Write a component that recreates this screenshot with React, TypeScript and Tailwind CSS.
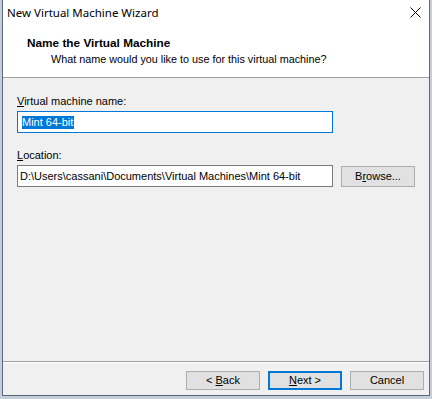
import React from "react";

const ff = "font-['Microsoft_Sans_Serif','Liberation_Sans',Arial,sans-serif]";

function Btn({ children, primary = false, className = "" }: { children: React.ReactNode; primary?: boolean; className?: string }) {
  return (
    <div
      className={
        "flex items-center justify-center bg-[#e1e1e1] leading-none text-black text-[11px] " +
        ff +
        " " +
        (primary ? "border-2 border-[#0078d7] " : "border border-[#adadad] ") +
        className
      }
    >
      {children}
    </div>
  );
}

export default function App() {
  return (
    <div className="w-[432px] h-[399px] bg-[#c5cfd9] overflow-hidden text-black">
      <div className="ml-[2px] w-[428px] h-[396px] border-l border-r border-b border-[#5b6776] bg-[#f0f0f0] flex flex-col">
        {/* Header */}
        <div className="relative h-[78px] bg-white border-b border-[#a0a0a0] flex flex-col">
          <div className="h-[26px] pl-[4px] flex items-center font-['Segoe_UI','Noto_Sans',sans-serif] text-[11.5px] leading-[16px]">
            New Virtual Machine Wizard
          </div>
          <div className="absolute right-[8px] top-[7px] w-[11px] h-[11px]">
            <svg width="11" height="11" viewBox="0 0 11 11">
              <path d="M0.5 0.5 L10.5 10.5 M10.5 0.5 L0.5 10.5" stroke="#000" strokeWidth="1" />
            </svg>
          </div>
          <div className={"pl-[24px] mt-[9px] leading-[16px] font-bold text-[11.8px] " + ff}>Name the Virtual Machine</div>
          <div className={"pl-[48px] leading-[16px] text-[10.8px] " + ff}>What name would you like to use for this virtual machine?</div>
        </div>
        {/* Body */}
        <div className={"flex-1 flex flex-col pl-[14px] pt-[15px] text-[11px] " + ff}>
          <div className="leading-[16px]">
            <span className="underline">V</span>irtual machine name:
          </div>
          <div className="mt-[2px] w-[316px] h-[22px] bg-white border border-[#0078d7] flex items-center pl-[4px]">
            <span className="bg-[#0078d7] text-white leading-[13px] pr-[1px]">Mint 64-bit</span>
          </div>
          <div className="mt-[14px] leading-[16px]">
            <span className="underline">L</span>ocation:
          </div>
          <div className="mt-[2px] flex items-center gap-[8px]">
            <div className="w-[316px] h-[22px] bg-white border border-[#7a7a7a] flex items-center pl-[2px] leading-[16px] whitespace-nowrap overflow-hidden">
              D:\Users\cassani\Documents\Virtual Machines\Mint 64-bit
            </div>
            <Btn className="w-[74px] h-[21px]">
              B<span className="underline">r</span>owse...
            </Btn>
          </div>
        </div>
        {/* Footer */}
        <div className="border-t border-[#a0a0a0]">
          <div className="border-t border-white h-[33px] flex items-start justify-end gap-[8px] pr-[5px] pt-[8px]">
            <Btn className="w-[74px] h-[19px]">
              &lt; <span className="underline ml-[3px]">B</span>ack
            </Btn>
            <Btn primary className="w-[74px] h-[19px]">
              <span className="underline">N</span>ext &gt;
            </Btn>
            <Btn className="w-[74px] h-[19px]">Cancel</Btn>
          </div>
        </div>
      </div>
    </div>
  );
}
